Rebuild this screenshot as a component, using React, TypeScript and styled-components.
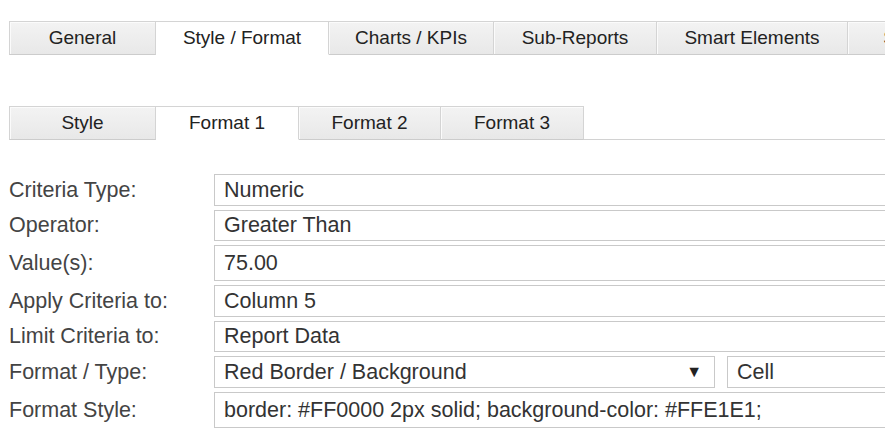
import { Fragment } from "react";
import styled, { createGlobalStyle } from "styled-components";

const GlobalStyle = createGlobalStyle`
  html, body {
    margin: 0;
    padding: 0;
    background: #ffffff;
    overflow: hidden;
  }
  body {
    font-family: "Liberation Sans", Arial, sans-serif;
    color: #333333;
  }
`;

const Page = styled.div`
  width: 885px;
  height: 439px;
  overflow: hidden;
  padding: 21px 0 0 9px;
  box-sizing: border-box;
`;

const TabBar = styled.div<{ $gap: number }>`
  display: flex;
  width: 1100px;
  margin-bottom: ${(p) => p.$gap}px;
  border-bottom: 1px solid #d2d2d2;
`;

const Tab = styled.div<{ $width: number; $active?: boolean }>`
  flex: 0 0 ${(p) => p.$width}px;
  height: 34px;
  box-sizing: border-box;
  margin-bottom: -1px;
  display: flex;
  align-items: center;
  justify-content: center;
  font-size: 19px;
  color: #222222;
  white-space: nowrap;
  border: 1px solid #d4d4d4;
  border-left: none;
  background: ${(p) =>
    p.$active ? "#ffffff" : "linear-gradient(#f3f3f3, #e8e8e8)"};
  border-bottom-color: ${(p) => (p.$active ? "#ffffff" : "#cccccc")};
  box-shadow: ${(p) => (p.$active ? "none" : "inset 1px 1px 0 #fbfbfb")};

  &:first-child {
    border-left: 1px solid #d4d4d4;
  }
`;

const Form = styled.div`
  display: grid;
  grid-template-columns: 205px 1000px;
  row-gap: 4px;
  align-items: center;
`;

const Label = styled.div`
  font-size: 21.5px;
  color: #444444;
  white-space: nowrap;
`;

const FieldRow = styled.div`
  display: flex;
  gap: 12px;
`;

const Field = styled.div<{ $height: number; $width?: number }>`
  height: ${(p) => p.$height}px;
  ${(p) => (p.$width ? `flex: 0 0 ${p.$width}px;` : "flex: 1;")}
  box-sizing: border-box;
  border: 1px solid #c9c9c9;
  background: #ffffff;
  padding: 0 9px;
  display: flex;
  align-items: center;
  justify-content: space-between;
  font-size: 21.5px;
  color: #333333;
  white-space: nowrap;
`;

const Arrow = styled.span`
  font-size: 16px;
  color: #222222;
  margin-right: 3px;
`;

const topTabs = [
  { label: "General", width: 147 },
  { label: "Style / Format", width: 173, active: true },
  { label: "Charts / KPIs", width: 165 },
  { label: "Sub-Reports", width: 163 },
  { label: "Smart Elements", width: 191 },
  { label: "Security", width: 140 },
];

const subTabs = [
  { label: "Style", width: 147 },
  { label: "Format 1", width: 143, active: true },
  { label: "Format 2", width: 142 },
  { label: "Format 3", width: 143 },
];

const rows = [
  { label: "Criteria Type:", value: "Numeric", height: 32 },
  { label: "Operator:", value: "Greater Than", height: 31 },
  { label: "Value(s):", value: "75.00", height: 36 },
  { label: "Apply Criteria to:", value: "Column 5", height: 32 },
  { label: "Limit Criteria to:", value: "Report Data", height: 31 },
];

export default function App() {
  return (
    <>
      <GlobalStyle />
      <Page>
        <TabBar $gap={51}>
          {topTabs.map((t) => (
            <Tab key={t.label} $width={t.width} $active={t.active}>
              {t.label}
            </Tab>
          ))}
        </TabBar>
        <TabBar $gap={34}>
          {subTabs.map((t) => (
            <Tab key={t.label} $width={t.width} $active={t.active}>
              {t.label}
            </Tab>
          ))}
        </TabBar>
        <Form>
          {rows.map((r) => (
            <Fragment key={r.label}>
              <Label>{r.label}</Label>
              <FieldRow>
                <Field $height={r.height}>{r.value}</Field>
              </FieldRow>
            </Fragment>
          ))}
          <Label>Format / Type:</Label>
          <FieldRow>
            <Field $height={32} $width={501}>
              <span>Red Border / Background</span>
              <Arrow>▼</Arrow>
            </Field>
            <Field $height={32}>Cell</Field>
          </FieldRow>
          <Label>Format Style:</Label>
          <FieldRow>
            <Field $height={36}>
              border: #FF0000 2px solid; background-color: #FFE1E1;
            </Field>
          </FieldRow>
        </Form>
      </Page>
    </>
  );
}
